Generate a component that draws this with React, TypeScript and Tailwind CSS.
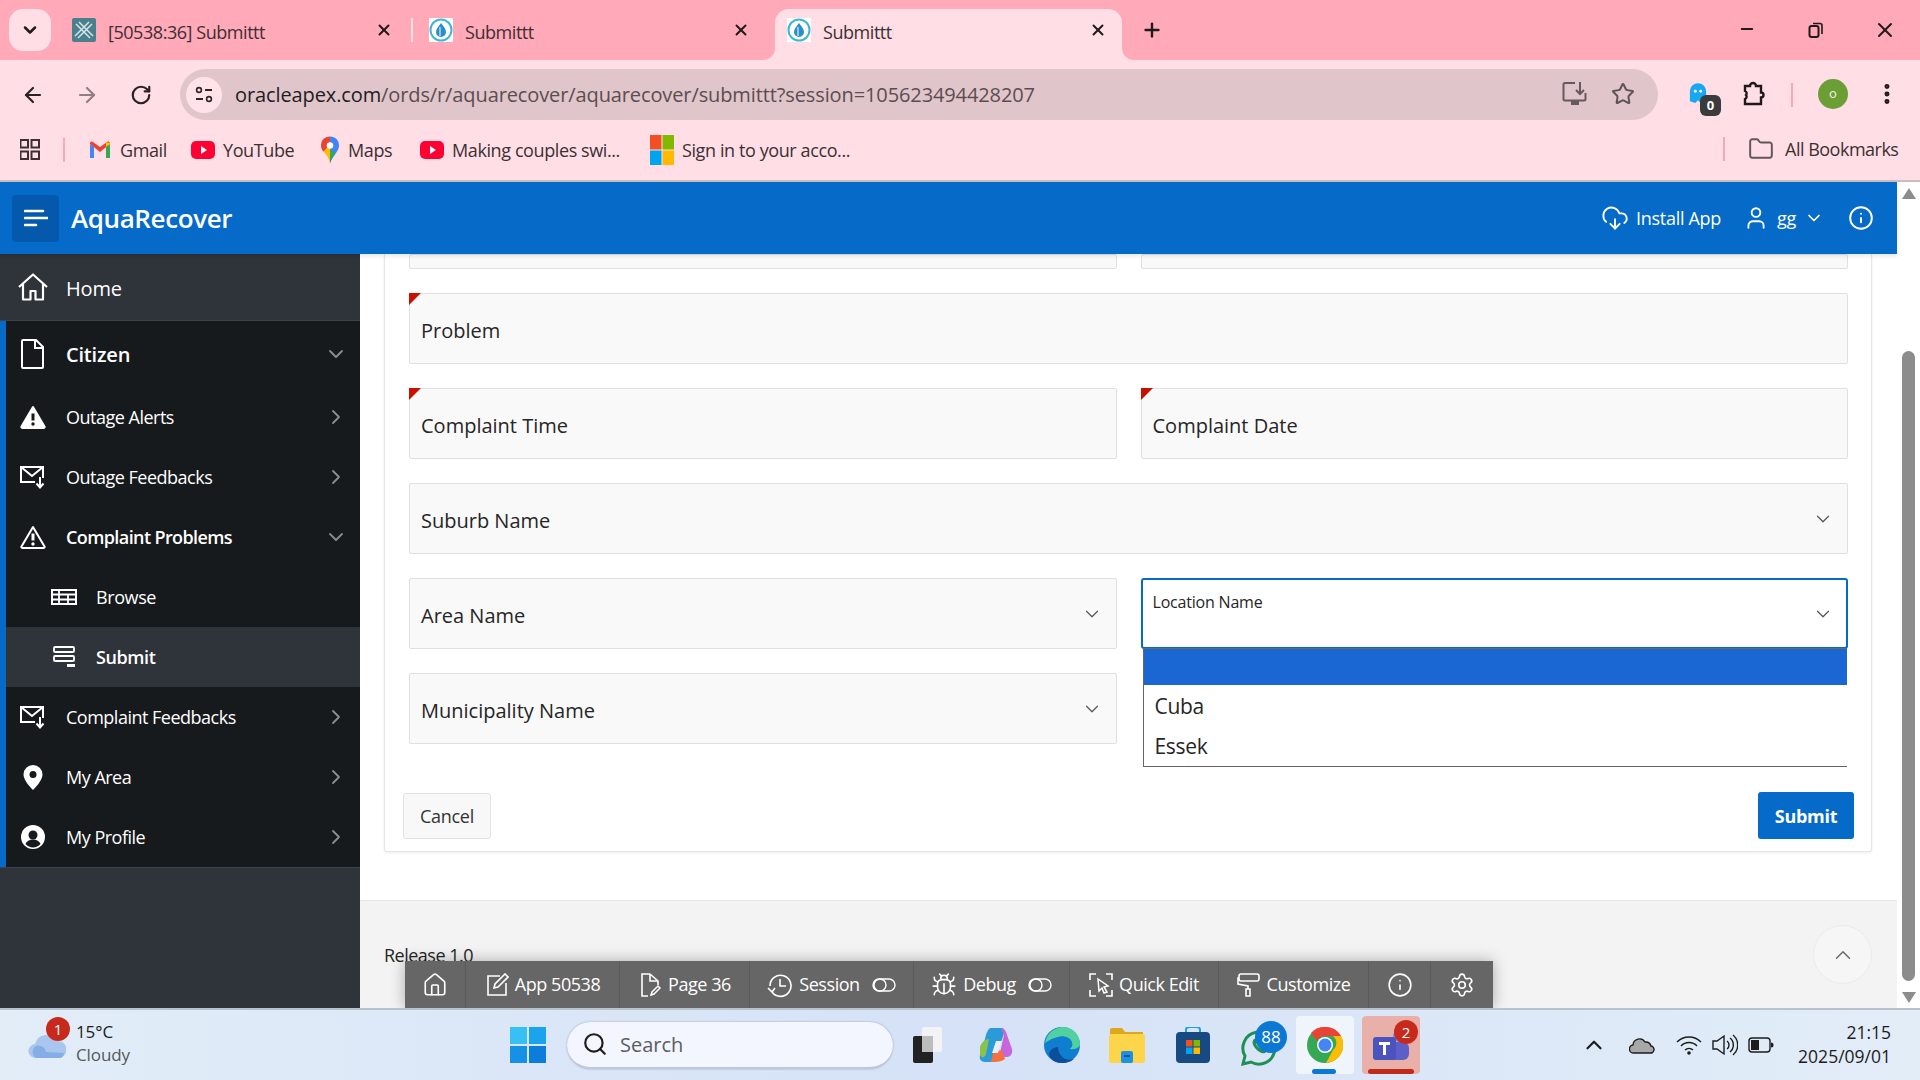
import React from "react";
import { ArrowLeft, ArrowRight, RotateCw, Star, MoreVertical, Folder, X, Plus, Minus, ChevronDown, ChevronRight, ChevronUp, Search, Info, Settings, Home, Bug, User, CloudDownload } from "lucide-react";

const S = ({ w, h = w, vb, children, className = "" }: { w: number; h?: number; vb?: string; children: React.ReactNode; className?: string }) => (
  <svg width={w} height={h} viewBox={vb ?? `0 0 ${w} ${h}`} fill="none" className={"shrink-0 " + className}>{children}</svg>
);

const Drop = () => (
  <S w={24} className="bg-white"><circle cx="12" cy="12" r="10.5" stroke="#3fb6d8" strokeWidth="2" /><path d="M12 5c3 4 5 6 5 9a5 5 0 0 1-10 0c0-3 2-5 5-9z" fill="#2a8fc4" /><path d="M11 9v9" stroke="#fff" /></S>
);
const Cross = () => (
  <S w={24} className="bg-[#4a7f8c] rounded-[2px]"><path d="M4 6l14 14M7 4l14 14M20 6L6 20M17 4L3 18" stroke="#d5e6ea" strokeWidth="1.5" /></S>
);
const Gmail = () => (
  <S w={24} vb="0 0 24 24"><path d="M2 20V6l4 3v11z" fill="#4285f4" /><path d="M22 20V6l-4 3v11z" fill="#34a853" /><path d="M2 6l10 8 10-8v-1c0-1-2-2-3-1l-7 5-7-5C4 3 2 4 2 5z" fill="#ea4335" /><path d="M18 4l4 1v1l-4 3z" fill="#fbbc04" /></S>
);
const Yt = () => (
  <S w={24} vb="0 0 24 24"><rect x="0" y="3" width="24" height="18" rx="5" fill="#ff0033" /><path d="M10 8l6 4-6 4z" fill="#fff" /></S>
);
const Pin = () => (
  <S w={18} h={28} vb="0 0 20 30" className="ml-[3px] mr-[1px]"><path d="M10 0c6 0 10 4 10 10 0 7-7 11-10 20z" fill="#4285f4" /><path d="M10 0C4 0 0 4 0 10c0 3 1 5 3 7l7-8z" fill="#ea4335" /><path d="M3 17c3 3 6 7 7 13V9z" fill="#fbbc04" /><path d="M10 30c1-5 4-8 6-11L10 14z" fill="#34a853" /><circle cx="10" cy="10" r="3.6" fill="#fff" /></S>
);
const Ms = () => (
  <S w={24} h={30} vb="0 0 24 30"><rect width="11.5" height="14.5" fill="#f25022" /><rect x="12.5" width="11.5" height="14.5" fill="#7fba00" /><rect y="15.5" width="11.5" height="14.5" fill="#00a4ef" /><rect x="12.5" y="15.5" width="11.5" height="14.5" fill="#ffb900" /></S>
);

const Tab = ({ icon, label, close, active, sep }: { icon: React.ReactNode; label: string; close: number; active?: boolean; sep?: boolean }) => (
  <div className={"relative flex items-center h-[51px] pb-[9px] text-[18px] tracking-[-0.45px] text-[#3c2f33] " + (active ? "w-[347px] pl-[12px] bg-[#ffdfe5] rounded-t-[14px]" : "w-[357px] pl-[21px]")}>
    {active && <>
      <span className="absolute bottom-0 -left-[12px] w-3 h-3 bg-[#ffdfe5]"><span className="block w-3 h-3 bg-[#ffa9b9] rounded-br-[12px]" /></span>
      <span className="absolute bottom-0 -right-[12px] w-3 h-3 bg-[#ffdfe5]"><span className="block w-3 h-3 bg-[#ffa9b9] rounded-bl-[12px]" /></span>
    </>}
    {icon}
    <span className="ml-[12px] whitespace-nowrap translate-y-[2px]">{label}</span>
    <X size={18} strokeWidth={2.6} color="#1f1a1b" className="absolute top-[12px]" style={{ left: close }} />
    {sep && <span className="absolute -right-[5px] top-[9px] w-[2px] h-[24px] bg-[#ffdfe5]" />}
  </div>
);

const Bm = ({ icon, label, w }: { icon: React.ReactNode; label: string; w: number }) => (
  <div className="flex items-center gap-[8px] text-[18px] tracking-[-0.4px] text-[#3c3033] whitespace-nowrap" style={{ width: w }}>{icon}<span>{label}</span></div>
);

const Chrome = () => (
  <div className="flex flex-col bg-[#ffdfe5] border-b-2 border-[#cdbcc0]">
    <div className="flex items-end h-[60px] bg-[#ffa9b9] pl-[9px] relative">
      <div className="self-start mt-[9px] w-[42px] h-[42px] rounded-[14px] bg-[#ffdfe5] flex items-center justify-center">
        <ChevronDown size={20} strokeWidth={3} color="#201a1b" />
      </div>
      <div className="flex items-start self-start mt-[9px]">
        <Tab icon={<Cross />} label="[50538:36] Submittt" close={324} sep />
        <Tab icon={<Drop />} label="Submittt" close={324} />
      </div>
      <div className="absolute left-[775px] bottom-0">
        <Tab icon={<Drop />} label="Submittt" close={314} active />
      </div>
      <Plus size={22} strokeWidth={2.6} color="#1f1a1b" className="absolute left-[1141px] top-[19px]" />
      <Minus size={18} strokeWidth={2.4} color="#1f1a1b" className="absolute left-[1738px] top-[20px]" />
      <S w={16} className="absolute left-[1808px] top-[22px]"><rect x="1.5" y="4" width="9" height="11" rx="2" stroke="#1f1a1b" strokeWidth="2" /><path d="M5 1.5h7a2 2 0 0 1 2 2V12" stroke="#1f1a1b" strokeWidth="1.6" /></S>
      <X size={24} strokeWidth={2} color="#1f1a1b" className="absolute left-[1873px] top-[18px]" />
    </div>
    <div className="flex items-start h-[65px] pt-[9px]">
      <div className="flex items-center h-[51px] pl-[21px]">
        <ArrowLeft size={24} strokeWidth={2.2} color="#2a2326" />
        <ArrowRight size={24} strokeWidth={2.2} color="#8f7f83" className="ml-[30px]" />
        <RotateCw size={22} strokeWidth={2.4} color="#2a2326" className="ml-[31px]" />
      </div>
      <div className="flex items-center h-[51px] w-[1478px] ml-[28px] rounded-full bg-[#e0c5ca] pl-[6px] relative">
        <div className="w-[36px] h-[36px] rounded-full bg-[#ffe3e8] flex items-center justify-center">
          <S w={20}><circle cx="5" cy="5" r="2.4" stroke="#2b2528" strokeWidth="1.6" /><path d="M11 5h7M2 14h7" stroke="#2b2528" strokeWidth="1.8" /><circle cx="15" cy="14" r="2.4" stroke="#2b2528" strokeWidth="1.6" /></S>
        </div>
        <span className="ml-[13px] text-[20px] tracking-[-0.11px] whitespace-nowrap text-[#5c4d51]"><span className="text-[#221c1e]">oracleapex.com</span>/ords/r/aquarecover/aquarecover/submittt?session=105623494428207</span>
        <S w={26} className="absolute left-[1382px] top-[12px]"><path d="M13 2H3a1.5 1.5 0 0 0-1.5 1.500V18A1.500 1.500 0 0 0 3 19.500h19a1.500 1.500 0 0 0 1.500-1.500V12" stroke="#665a5d" strokeWidth="2" /><path d="M10 20v3h6v-3" fill="#665a5d" stroke="#665a5d" strokeWidth="2" /><path d="M18 1v12M14 9l4 4 4-4" stroke="#665a5d" strokeWidth="2" /></S>
        <Star size={24} strokeWidth={2} color="#5e5356" className="absolute left-[1431px] top-[13px]" />
      </div>
      <div className="relative flex-1 h-[51px]">
        <S w={18} h={26} vb="0 0 20 26" className="absolute left-[31px] top-[12px]"><path d="M1 21V10a9 9 0 0 1 18 0v7l-6 6-3-3-3 3z" fill="#16a9f2" /><circle cx="7" cy="10" r="1.600" fill="#fff" /><circle cx="13" cy="10" r="1.600" fill="#fff" /></S>
        <div className="absolute left-[42px] top-[26px] w-[21px] h-[21px] rounded-[6px] bg-[#3b3b3d] text-white text-[13px] font-bold flex items-center justify-center">0</div>
        <S w={26} className="absolute left-[83px] top-[12px]"><path d="M4 5h5a3 3 0 0 1 6 0h5v6.500a2 2 0 0 1 0 5V23H4v-5a2.500 2.500 0 0 0 1-4 2.500 2.500 0 0 0-1-4z" stroke="#1e1a1b" strokeWidth="2.400" /></S>
        <span className="absolute left-[133px] top-[14px] w-[2px] h-[24px] bg-[#f5a9b7]" />
        <div className="absolute left-[160px] top-[10px] w-[30px] h-[30px] rounded-full bg-[#6b9e34] text-[#f3f3e6] text-[13px] flex items-center justify-center">o</div>
        <MoreVertical size={26} strokeWidth={2.6} color="#201a1b" className="absolute left-[216px] top-[12px]" />
      </div>
    </div>
    <div className="flex items-center h-[50px] mb-[5px] pl-[20px] relative">
      <S w={20} h={22} vb="0 0 20 22"><rect x="0.500" y="1" width="7.500" height="7.500" stroke="#3a3033" strokeWidth="2" /><rect x="11.500" y="1" width="7.500" height="7.500" stroke="#3a3033" strokeWidth="2" /><rect x="0.500" y="12.500" width="7.500" height="7.500" stroke="#3a3033" strokeWidth="2" /><rect x="11.500" y="12.500" width="7.500" height="7.500" stroke="#3a3033" strokeWidth="2" /></S>
      <span className="ml-[23px] w-[2px] h-[24px] bg-[#f5a9b7]" />
      <div className="ml-[23px] flex items-center">
        <Bm icon={<Gmail />} label="Gmail" w={103} />
        <Bm icon={<Yt />} label="YouTube" w={127} />
        <Bm icon={<Pin />} label="Maps" w={102} />
        <Bm icon={<Yt />} label="Making couples swi..." w={230} />
        <Bm icon={<Ms />} label="Sign in to your acco..." w={300} />
      </div>
      <span className="absolute left-[1723px] top-[12px] w-[2px] h-[24px] bg-[#f5a9b7]" />
      <Folder size={26} strokeWidth={1.800} color="#615659" className="absolute left-[1748px] top-[11px]" />
      <span className="absolute left-[1785px] top-[11px] text-[18px] tracking-[-0.5px] text-[#3c3033] whitespace-nowrap">All Bookmarks</span>
    </div>
  </div>
);

const HeaderBar = () => (
  <div className="flex items-center h-[72px] bg-[#056ac8] pl-[12px] pr-[23px] text-white relative z-10 shadow-[0_2px_4px_rgba(0,0,0,0.1)]">
    <div className="w-[47px] h-[47px] rounded-[4px] bg-[#0559ad] flex items-center justify-center">
      <S w={24} h={18} vb="0 0 24 18"><path d="M1 2h18M1 9h23M1 16h11" stroke="#fff" strokeWidth="2.600" strokeLinecap="round" /></S>
    </div>
    <span className="ml-[12px] mt-[1px] text-[26px] font-semibold tracking-[-0.4px]">AquaRecover</span>
    <div className="ml-auto flex items-center text-[18px] tracking-[-0.3px]">
      <CloudDownload size={28} strokeWidth={1.600} />
      <span className="ml-[7px] whitespace-nowrap">Install App</span>
      <User size={26} strokeWidth={1.700} className="ml-[22px]" />
      <span className="ml-[8px]">gg</span>
      <ChevronDown size={20} strokeWidth={2} className="ml-[8px]" />
      <Info size={26} strokeWidth={1.800} className="ml-[24px]" />
    </div>
  </div>
);

const Triangle = ({ filled }: { filled?: boolean }) => (
  <S w={26} h={24} vb="0 0 26 24">
    <path d="M13 2L1.500 21.500a1 1 0 0 0 1 1.500h21a1 1 0 0 0 1-1.500z" fill={filled ? "#fff" : "none"} stroke="#fff" strokeWidth="2" strokeLinejoin="round" />
    <path d="M13 8.500v7" stroke={filled ? "#171a1d" : "#fff"} strokeWidth="3" /><circle cx="13" cy="19" r="1.700" fill={filled ? "#171a1d" : "#fff"} />
  </S>
);
const MailDown = () => (
  <S w={26} h={24} vb="0 0 26 24"><path d="M23 13V2H1v15h14M1 2l11 9 11-9" stroke="#fff" strokeWidth="2" /><path d="M20 12v10M16.500 18.500L20 22.500l3.500-4" stroke="#fff" strokeWidth="2" /></S>
);

const NavRow = ({ icon, label, chev, bold, big, h = 60 }: { icon: React.ReactNode; label: string; chev: "d" | "r"; bold?: boolean; big?: boolean; h?: number }) => (
  <div className="flex items-center text-white" style={{ height: h }}>
    <div className="w-[54px] flex justify-center shrink-0">{icon}</div>
    <span className={"ml-[6px] whitespace-nowrap " + (big ? "text-[20px] pt-[2px] tracking-[-0.2px] " : "text-[18px] ") + (bold && !big ? "tracking-[-0.6px] " : big ? "" : "tracking-[-0.5px] ") + (bold ? "font-semibold" : "")}>{label}</span>
    <span className="ml-auto mr-[12px]">
      {chev === "d" ? <ChevronDown size={24} strokeWidth={1.800} color="#8a8d91" /> : <ChevronRight size={24} strokeWidth={1.800} color="#8a8d91" />}
    </span>
  </div>
);
const SubRow = ({ icon, label, active }: { icon: React.ReactNode; label: string; active?: boolean }) => (
  <div className={"flex items-center h-[60px] text-white text-[18px] tracking-[-0.4px] pl-[45px] " + (active ? "bg-[#2f333a] font-semibold" : "")}>
    <div className="w-[26px] flex justify-center">{icon}</div>
    <span className="ml-[19px]">{label}</span>
  </div>
);

const Sidebar = () => (
  <aside className="w-[360px] shrink-0 bg-[#2f333a] flex flex-col">
    <div className="flex items-center h-[67px] border-b border-[#3e4249] pl-[18px] text-white text-[20px] tracking-[-0.2px]">
      <S w={30} h={28} vb="0 0 30 28"><path d="M1 14L15 1.500 29 14M5 11v15.500h7.500V18h5v8.500H25V11" stroke="#fff" strokeWidth="2.200" strokeLinejoin="round" /></S>
      <span className="ml-[18px] pt-[4px]">Home</span>
    </div>
    <div className="border-l-[6px] border-[#056ac8] bg-[#171a1d]">
      <NavRow h={66} big bold chev="d" label="Citizen" icon={<S w={24} h={30} vb="0 0 24 30"><path d="M2 1h13l7 7v20a1 1 0 0 1-1 1H2a1 1 0 0 1-1-1V2a1 1 0 0 1 1-1zM14 1v8h8" stroke="#fff" strokeWidth="2" /></S>} />
      <NavRow chev="r" label="Outage Alerts" icon={<Triangle filled />} />
      <NavRow chev="r" label="Outage Feedbacks" icon={<MailDown />} />
      <NavRow chev="d" bold label="Complaint Problems" icon={<Triangle />} />
      <SubRow label="Browse" icon={<S w={26} h={16} vb="0 0 26 16"><rect x="1" y="1" width="24" height="14" stroke="#fff" strokeWidth="2" /><path d="M1 5.500h24M1 10.500h24M8 1v14M17 5v10" stroke="#fff" strokeWidth="1.800" /></S>} />
      <SubRow active label="Submit" icon={<S w={22} h={22} vb="0 0 22 22"><rect x="1" y="1" width="20" height="5" rx="1" stroke="#fff" strokeWidth="1.800" /><rect x="1" y="10" width="20" height="5" rx="1" stroke="#fff" strokeWidth="1.800" /><rect x="14" y="18" width="8" height="3" fill="#fff" /></S>} />
      <NavRow chev="r" label="Complaint Feedbacks" icon={<MailDown />} />
      <NavRow chev="r" label="My Area" icon={<S w={20} h={25} vb="0 0 20 25"><path d="M10 0a9.500 9.500 0 0 1 9.500 9.500C19.500 15 13 22 10 25 7 22 .500 15 .500 9.500A9.500 9.500 0 0 1 10 0z" fill="#fff" /><circle cx="10" cy="9.500" r="3.500" fill="#171a1d" /></S>} />
      <NavRow chev="r" label="My Profile" icon={<S w={24} vb="0 0 24 24"><circle cx="12" cy="12" r="12" fill="#fff" /><circle cx="12" cy="10" r="4.500" fill="#171a1d" /><path d="M4.500 19c1-3 4-4.500 7.500-4.500s6.500 1.500 7.500 4.500a10 10 0 0 1-15 0z" fill="#171a1d" /></S>} />
    </div>
    <div className="flex-1 border-t border-[#3e4249]" />
  </aside>
);

const Field = ({ label, req, sel, h = 71, wide }: { label?: string; req?: boolean; sel?: boolean; h?: number; wide?: boolean }) => (
  <div className={"relative flex items-center pl-[11px] pt-[5px] bg-[#f9f9f9] border border-[#e0e0e0] rounded-[2px] text-[20px] text-[#262626] " + (wide ? "col-span-2" : "")} style={{ height: h }}>
    {req && <span className="absolute -left-px -top-px w-0 h-0 border-t-[12px] border-r-[12px] border-t-[#c80f00] border-r-transparent" />}
    {label}
    {sel && <ChevronDown size={22} strokeWidth={1.300} color="#555" className="absolute right-[13px] top-[24px]" />}
  </div>
);

const LocationField = () => (
  <div className="relative">
    <div className="relative h-[71px] bg-white border-2 border-[#056ac8] rounded-[3px] pl-[10px] pt-[10px] text-[16px] tracking-[-0.2px] text-[#262626]">
      Location Name
      <ChevronDown size={22} strokeWidth={1.300} color="#555" className="absolute right-[12px] top-[23px]" />
    </div>
    <div className="absolute left-[2px] right-[1px] top-[70px] h-[119px] bg-white border-l border-t border-b border-[#666] text-[21px] text-[#262626] tracking-[-0.3px] z-20">
      <div className="h-[36px] bg-[#1a67d4]" />
      <div className="h-[41px] pl-[11px] pt-[2px] flex items-center">Cuba</div>
      <div className="h-[40px] pl-[11px] pt-[2px] flex items-center">Essek</div>
    </div>
  </div>
);

const Card = () => (
  <div className="ml-[24px] mr-[25px] bg-white border border-t-0 border-[#e6e6e6] rounded-b-[3px] shadow-[0_1px_3px_rgba(0,0,0,0.08)] pl-[24px] pr-[23px] pb-[12px]">
    <div className="grid grid-cols-2 gap-x-[24px] gap-y-[24px]">
      <Field h={15} /><Field h={15} />
      <Field label="Problem" req wide />
      <Field label="Complaint Time" req />
      <Field label="Complaint Date" req />
      <Field label="Suburb Name" sel wide />
      <Field label="Area Name" sel />
      <LocationField />
      <Field label="Municipality Name" sel />
    </div>
    <div className="flex items-center justify-between mt-[48px] -ml-[6px] -mr-[6px]">
      <div className="w-[88px] h-[46px] flex items-center justify-center pt-[2px] bg-[#f8f8f8] border border-[#e3e3e3] rounded-[3px] text-[18px] tracking-[-0.3px] text-[#333]">Cancel</div>
      <div className="w-[96px] h-[47px] flex items-center justify-center pt-[2px] bg-[#056ac8] rounded-[3px] text-[18px] font-bold tracking-[-0.3px] text-white">Submit</div>
    </div>
  </div>
);

const DevItem = ({ w, icon, label, toggle, last }: { w: number; icon: React.ReactNode; label?: string; toggle?: boolean; last?: boolean }) => (
  <div className={"flex items-center justify-center h-full gap-[6px] " + (last ? "" : "border-r border-[#5a5a5a]")} style={{ width: w }}>
    {icon}
    {label && <span className="whitespace-nowrap">{label}</span>}
    {toggle && <S w={24} h={14} vb="0 0 24 14" className="ml-[6px]"><rect x="1" y="1" width="22" height="12" rx="6" stroke="#fff" strokeWidth="1.400" /><circle cx="8" cy="7" r="6" stroke="#fff" strokeWidth="1.400" /></S>}
  </div>
);

const DevBar = () => {
  const c = { color: "#fff", strokeWidth: 1.500, size: 26 };
  return (
    <div className="absolute left-[45px] bottom-0 z-30 flex items-center w-[1088px] h-[47px] bg-[#666666] text-white text-[18px] tracking-[-0.45px] shadow-[0_0_14px_rgba(0,0,0,0.3)]">
      <DevItem w={61} icon={<Home {...c} />} />
      <DevItem w={154} icon={<S w={24} vb="0 0 24 24"><path d="M15 3H3v19h18V10" stroke="#fff" strokeWidth="1.600" /><path d="M9 15l1-4L20 1l3 3-10 10z" stroke="#fff" strokeWidth="1.600" /></S>} label="App 50538" />
      <DevItem w={130} icon={<S w={24} vb="0 0 24 24"><path d="M12 1H4v22h6M12 1l8 7v4M12 1v7h8" stroke="#fff" strokeWidth="1.600" /><path d="M13 22l1-3 6-6 2 2-6 6z" stroke="#fff" strokeWidth="1.500" /></S>} label="Page 36" />
      <DevItem w={164} icon={<S w={26} vb="0 0 26 26"><path d="M5 20a10.500 10.500 0 1 0-2-6M1 16l4 4 3-4" stroke="#fff" strokeWidth="1.600" /><path d="M13 7v7h6" stroke="#fff" strokeWidth="1.600" /></S>} label="Session" toggle />
      <DevItem w={156} icon={<Bug {...c} />} label="Debug" toggle />
      <DevItem w={149} icon={<S w={24} vb="0 0 24 24"><path d="M7 1H1v6M17 1h6v6M1 17v6h6M23 17v6h-6" stroke="#fff" strokeWidth="1.600" /><path d="M9 6l10 7-4 1 3 5-3 1-2-5-3 3z" stroke="#fff" strokeWidth="1.500" /></S>} label="Quick Edit" />
      <DevItem w={150} icon={<S w={24} vb="0 0 24 24"><rect x="2" y="1" width="20" height="7" rx="2" stroke="#fff" strokeWidth="1.600" /><path d="M2 5H1v6l10 2v3M9 16h4v7H9z" stroke="#fff" strokeWidth="1.600" /></S>} label="Customize" />
      <DevItem w={62} icon={<Info {...c} />} />
      <DevItem w={62} last icon={<Settings {...c} />} />
    </div>
  );
};

const Main = () => (
  <main className="relative flex-1 flex flex-col min-w-0 bg-white overflow-hidden">
    <Card />
    <div className="mt-[48px] flex-1 flex items-center bg-[#f3f3f3] border-t border-[#e8e8e8] pl-[24px] pr-[25px] text-[18px] tracking-[-0.5px] text-[#262626]">
      <span className="pt-[2px]">Release 1.0</span>
      <div className="ml-auto w-[59px] h-[59px] rounded-full bg-[#f6f6f6] border border-[#ebebeb] flex items-center justify-center">
        <ChevronUp size={26} strokeWidth={1.300} color="#666" />
      </div>
    </div>
    <DevBar />
  </main>
);

const Scrollbar = () => (
  <div className="w-[23px] shrink-0 bg-white flex flex-col items-center pt-[6px] pb-[5px]">
    <span className="w-0 h-0 border-x-[7px] border-x-transparent border-b-[11px] border-b-[#8c8c8c]" />
    <span className="mt-[152px] w-[13px] h-[630px] rounded-full bg-[#8c8c8c]" />
    <span className="mt-auto w-0 h-0 border-x-[7px] border-x-transparent border-t-[11px] border-t-[#8c8c8c]" />
  </div>
);

const Tile = ({ children, cls = "" }: { children: React.ReactNode; cls?: string }) => (
  <div className={"relative w-[58px] h-[58px] flex items-center justify-center rounded-[4px] " + cls}>{children}</div>
);

const Taskbar = () => (
  <div className="relative h-[72px] flex items-center border-t-2 border-[#b8c2cc] bg-gradient-to-r from-[#e2edf8] via-[#d5e2f7] to-[#e2edf8] text-[#1c1c1c]">
    <div className="relative ml-[28px] w-[48px] h-full flex items-center">
      <S w={38} h={26} vb="0 0 38 26" className="mt-[2px]"><path d="M8 25a7 7 0 0 1-1-14 12 12 0 0 1 22-3 8 8 0 0 1 2 17z" fill="#a8c6ee" /><path d="M8 25a7 7 0 0 1 0-12c5-1 9 1 10 6l18 1c0 3-2 5-5 5z" fill="#85aee4" /></S>
      <div className="absolute left-[18px] top-[7px] w-[24px] h-[24px] rounded-full bg-[#c72a1c] text-white text-[15px] flex items-center justify-center">1</div>
    </div>
    <div className="flex flex-col leading-[23px] text-[17px] tracking-[-0.1px] -mt-[4px]">
      <span>15°C</span>
      <span className="text-[#55585c]">Cloudy</span>
    </div>
    <div className="ml-[380px] grid grid-cols-2 gap-[2px] w-[36px] h-[36px]">
      <span className="bg-[#36c0f4]" /><span className="bg-[#1aa4ee]" /><span className="bg-[#1592e6]" /><span className="bg-[#0c7ddb]" />
    </div>
    <div className="ml-[21px] w-[326px] h-[47px] rounded-full bg-[#f3f6fe] border-b-2 border-[#c0c8dc] shadow-[0_0_2px_rgba(80,90,130,0.5)] flex items-center pl-[15px] text-[20px] text-[#5b5d62]">
      <Search size={26} strokeWidth={2} color="#1c1c1c" />
      <span className="ml-[12px] pt-[1px]">Search</span>
    </div>
    <S w={30} h={36} vb="0 0 30 36" className="ml-[19px]"><rect x="10" y="0" width="20" height="25" rx="2" fill="#f3f3f5" /><rect x="1" y="9" width="20" height="27" rx="2" fill="#222" /><rect x="10" y="9" width="11" height="16" fill="#bdbdbd" /></S>
    <S w={34} h={36} vb="0 0 34 36" className="ml-[37px]"><path d="M12 1h10c3 0 4 2 3 5l-8 25c-1 3-3 4-5 4H6c-4 0-6-3-5-7l5-16c1-5 3-11 6-11z" fill="#2a9bd8" /><path d="M1 20c1-4 5-8 9-8l-3 15c-1 4-5 4-6 1z" fill="#8bc34a" /><path d="M22 1c3 0 5 3 6 7l5 14c1 5-2 8-5 8h-8l5-22z" fill="#c864dc" /><path d="M12 35c5 0 10 0 14-3l-3-8-8-2z" fill="#f4703c" /><path d="M17 14h6l-4 12h-6z" fill="#e8eef8" /></S>
    <S w={36} vb="0 0 36 36" className="ml-[31px]"><circle cx="18" cy="18" r="18" fill="#0f7ed0" /><path d="M1 16C3 5 12 0 19 0c9 0 17 7 17 17 0 3-4 6-10 5 2-2 3-4 2-7-2-5-9-7-14-5-5 1-9 3-13 6z" fill="#52d1a0" /><path d="M14 20c0 8 7 15 16 12-2 2-7 4-12 4-6 0-11-3-13-8 0-4 4-8 9-8z" fill="#0a4e9c" /></S>
    <S w={36} vb="0 0 36 36" className="ml-[29px]"><path d="M1 3a2 2 0 0 1 2-2h10l3 4h18v30H1z" fill="#dda81b" /><rect x="0" y="7" width="36" height="29" rx="2" fill="#fcd54a" /><rect x="12" y="24" width="12" height="12" rx="2" fill="#1f8fe0" /><rect x="15" y="28" width="6" height="2" fill="#0b5aa0" /></S>
    <S w={34} h={36} vb="0 0 34 36" className="ml-[31px]"><path d="M10 6V3a3 3 0 0 1 3-3h8a3 3 0 0 1 3 3v3" stroke="#1fa0e0" strokeWidth="2" /><rect x="0" y="5" width="34" height="31" rx="4" fill="#164a80" /><rect x="10" y="13" width="6.500" height="6.500" fill="#f25022" /><rect x="17.500" y="13" width="6.500" height="6.500" fill="#7fba00" /><rect x="10" y="20.500" width="6.500" height="6.500" fill="#00a4ef" /><rect x="17.500" y="20.500" width="6.500" height="6.500" fill="#ffb900" /></S>
    <div className="relative ml-[31px] w-[36px] h-[40px]">
      <S w={36} h={40} vb="0 0 36 40" className="mt-[2px]"><path d="M4 29L2 37l8-2a16 16 0 1 0-6-6z" stroke="#1f8f55" strokeWidth="3" /><path d="M13 12c-2 2-2 5 1 9s7 6 10 5c2-1 2-3 2-4l-4-2-2 2c-2-1-4-3-5-5l2-2-2-4z" fill="#1f8f55" /></S>
      <div className="absolute left-[14px] -top-[4px] w-[32px] h-[32px] rounded-full bg-[#0b78d4] text-white text-[17px] flex items-center justify-center">88</div>
    </div>
    <Tile cls="ml-[19px] bg-[#f0f4fb]">
      <S w={36} vb="0 0 36 36"><circle cx="18" cy="18" r="18" fill="#34a853" /><path d="M18 0a18 18 0 0 1 16 9H18a9 9 0 0 0-8 5L4 6a18 18 0 0 1 14-6z" fill="#ea4335" /><path d="M34 9a18 18 0 0 1-15 27l7-13a9 9 0 0 0 0-14z" fill="#fbbc04" /><circle cx="18" cy="18" r="8" fill="#fff" /><circle cx="18" cy="18" r="6.500" fill="#4285f4" /></S>
      <span className="absolute bottom-0 left-[16px] w-[24px] h-[5px] rounded-full bg-[#0b78d4]" />
    </Tile>
    <Tile cls="ml-[8px] bg-[#e9b0aa]">
      <S w={40} h={38} vb="0 0 40 38"><circle cx="28" cy="10" r="6" fill="#7b83eb" /><rect x="18" y="16" width="20" height="18" rx="6" fill="#5b5fc7" /><rect x="2" y="11" width="23" height="23" rx="3" fill="#4b53bc" /><path d="M8 16h11v3h-4v10h-3V19H8z" fill="#fff" /></S>
      <div className="absolute left-[32px] top-[4px] w-[24px] h-[24px] rounded-full bg-[#c72a1c] text-white text-[15px] flex items-center justify-center">2</div>
      <span className="absolute bottom-0 left-[6px] w-[46px] h-[5px] rounded-full bg-[#c02a1c]" />
    </Tile>
    <div className="ml-auto flex items-center pr-[29px]">
      <ChevronUp size={26} strokeWidth={2} color="#1c1c1c" />
      <S w={26} h={18} vb="0 0 26 18" className="ml-[22px]"><path d="M5 17a4 4 0 0 1-1-8 6.500 6.500 0 0 1 12-3 5.500 5.500 0 0 1 6 4 3.500 3.500 0 0 1-1 7z" fill="#a8a8a8" stroke="#1c1c1c" strokeWidth="1.400" /></S>
      <S w={26} h={20} vb="0 0 26 20" className="ml-[21px]"><path d="M1 7a17 17 0 0 1 24 0M5 11a11 11 0 0 1 16 0M9 15a6 6 0 0 1 8 0" stroke="#1c1c1c" strokeWidth="1.500" /><circle cx="13" cy="18" r="1.800" fill="#1c1c1c" /></S>
      <S w={26} h={22} vb="0 0 26 22" className="ml-[10px]"><path d="M1 7h4l7-5v18l-7-5H1z" stroke="#1c1c1c" strokeWidth="1.400" /><path d="M15 7a5 5 0 0 1 0 8M18 4a9 9 0 0 1 0 14M21 1a13 13 0 0 1 0 20" stroke="#1c1c1c" strokeWidth="1.400" /></S>
      <S w={26} h={16} vb="0 0 26 16" className="ml-[10px]"><rect x="1" y="1" width="21" height="14" rx="3" stroke="#1c1c1c" strokeWidth="1.400" /><rect x="3" y="3" width="8" height="10" fill="#1c1c1c" /><path d="M23 5.500a2.500 2.500 0 0 1 0 5z" fill="#1c1c1c" /></S>
      <div className="ml-[24px] flex flex-col items-end leading-[24px] text-[17.5px] -mt-[3px]">
        <span>21:15</span>
        <span>2025/09/01</span>
      </div>
    </div>
  </div>
);

export default function App() {
  return (
    <div className="w-[1920px] h-[1080px] overflow-hidden flex flex-col font-['Open_Sans',sans-serif] bg-white">
      <Chrome />
      <div className="flex h-[826px]">
        <div className="flex-1 min-w-0 flex flex-col">
          <HeaderBar />
          <div className="flex flex-1 min-h-0">
            <Sidebar />
            <Main />
          </div>
        </div>
        <Scrollbar />
      </div>
      <Taskbar />
    </div>
  );
}
